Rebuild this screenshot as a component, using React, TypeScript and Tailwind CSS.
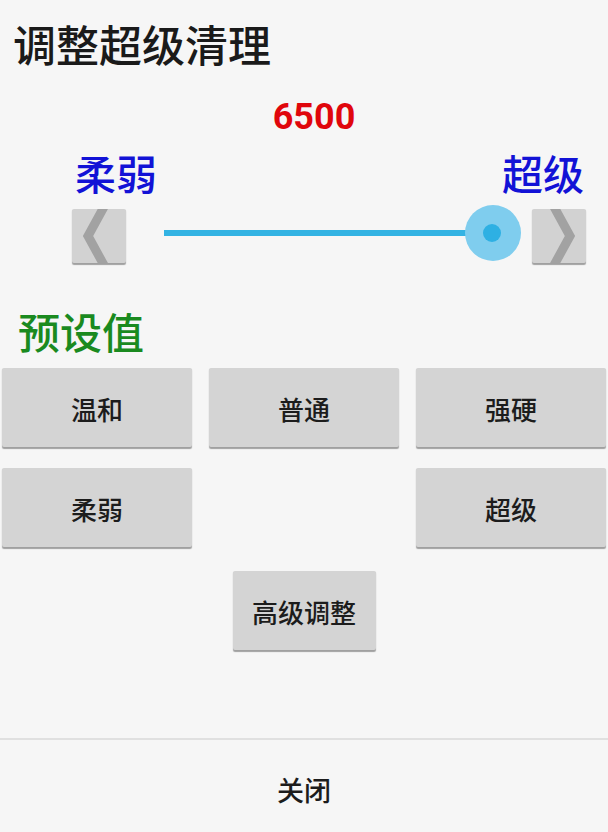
import React from "react";

const cjk = { fontFamily: '"Noto Sans CJK SC", "Noto Sans", sans-serif' };
const roboto = { fontFamily: 'Roboto, "Liberation Sans", sans-serif' };

function ArrowButton({ dir }: { dir: "left" | "right" }) {
  const pts = dir === "left" ? "33,-4 16,27 33,58" : "21,-4 38,27 21,58";
  return (
    <div className="w-[54px] h-[54px] bg-[#d2d2d2] rounded-[2px] shadow-[0_1.5px_1px_rgba(0,0,0,0.35)] overflow-hidden shrink-0">
      <svg width="54" height="54" viewBox="0 0 54 54">
        <polyline
          points={pts}
          fill="none"
          stroke="#a2a2a2"
          strokeWidth="9"
          strokeLinejoin="miter"
        />
      </svg>
    </div>
  );
}

function Btn({ label, className = "" }: { label: string; className?: string }) {
  return (
    <div
      className={`h-[79px] bg-[#d4d4d4] rounded-[2px] shadow-[0_1.5px_1px_rgba(0,0,0,0.35)] flex items-center justify-center pt-[3px] text-[26px] leading-none font-medium text-[#1c1c1c] ${className}`}
      style={cjk}
    >
      {label}
    </div>
  );
}

export default function App() {
  return (
    <div className="w-[608px] h-[832px] bg-[#f6f6f6] flex flex-col overflow-hidden">
      <div className="pt-[22px] pl-[13px] text-[43px] leading-none font-medium text-[#1a1a1a]" style={cjk}>
        调整超级清理
      </div>

      <div className="mt-[34px] flex justify-center pl-[20px]">
        <span className="text-[36px] leading-none font-bold text-[#e0060c]" style={roboto}>
          6500
        </span>
      </div>

      <div
        className="mt-[17px] flex justify-between pl-[75px] pr-[24px] text-[41px] leading-none font-medium text-[#1212d6]"
        style={cjk}
      >
        <span>柔弱</span>
        <span>超级</span>
      </div>

      <div className="mt-[12px] flex items-start">
        <div className="ml-[72px] mt-[4px]">
          <ArrowButton dir="left" />
        </div>
        <div className="ml-[38px] w-[357px] h-[56px] relative">
          <div className="absolute left-0 right-[28px] top-[25px] h-[6px] bg-[#33b3e3]" />
          <div className="absolute right-0 top-0 w-[56px] h-[56px] rounded-full bg-[#7fcdee] flex items-center justify-center">
            <div className="w-[18px] h-[18px] rounded-full bg-[#2eb0e3] -ml-[2px]" />
          </div>
        </div>
        <div className="ml-[11px] mt-[4px]">
          <ArrowButton dir="right" />
        </div>
      </div>

      <div className="mt-[47px] pl-[18px] text-[42px] leading-none font-medium text-[#1a8a1f]" style={cjk}>
        预设值
      </div>

      <div className="mt-[16px] px-[2px] grid grid-cols-3 gap-x-[17px] gap-y-[21px]">
        <Btn label="温和" />
        <Btn label="普通" />
        <Btn label="强硬" />
        <Btn label="柔弱" />
        <div />
        <Btn label="超级" />
      </div>

      <div className="mt-[24px] flex justify-center">
        <Btn label="高级调整" className="w-[143px]" />
      </div>

      <div className="flex-1" />

      <div className="h-[2px] bg-[#e0e0e0]" />
      <div
        className="h-[92px] flex items-center justify-center pt-[6px] text-[27px] leading-none font-medium text-[#1c1c1c]"
        style={cjk}
      >
        关闭
      </div>
    </div>
  );
}
